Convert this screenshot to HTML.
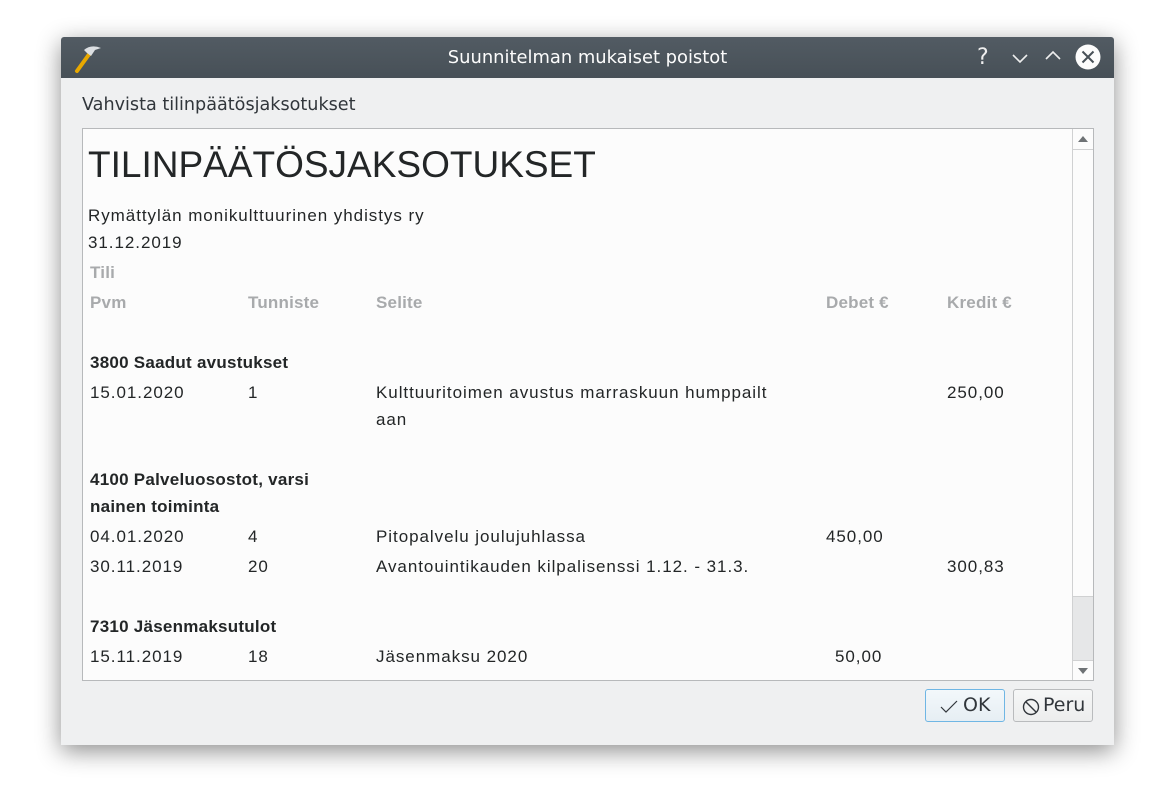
<!DOCTYPE html>
<html><head><meta charset="utf-8"><style>
body{margin:0;width:1175px;height:806px;background:#fff;position:relative;overflow:hidden;font-family:"Liberation Sans",sans-serif}
.win{position:absolute;left:61px;top:37px;width:1053px;height:708px;background:#eff0f1;box-shadow:0 6px 24px rgba(0,0,0,.45);border-radius:3px 3px 0 0}
.tb{position:absolute;left:0;top:0;width:1053px;height:41px;background:linear-gradient(#525b63,#475057);border-radius:3px 3px 0 0;color:#fff}
.tb .t{position:absolute;left:0;right:0;top:10px;text-align:center;font-family:"DejaVu Sans",sans-serif;font-size:17.9px;color:#fcfcfc}
.lbl{position:absolute;left:21px;top:58px;font-family:"DejaVu Sans",sans-serif;font-size:17.6px;color:#31363b}
.panel{position:absolute;left:21px;top:91px;width:1010px;height:551px;background:#fcfcfc;border:1px solid #b7b9bb}
.sb{position:absolute;right:0;top:0;width:20px;height:551px;border-left:1px solid #d0d1d2;background:#fcfcfc}
.tx{position:absolute;font-size:17px;letter-spacing:0.95px;color:#232627;white-space:nowrap}
.h{color:#a8aaac;font-weight:bold;letter-spacing:0.2px}
.b{font-weight:bold;letter-spacing:0.25px}
.btn{position:absolute;top:652px;height:33px;border:1px solid #b9bbbd;border-radius:3px;background:linear-gradient(#f6f7f7,#eceded);font-family:"DejaVu Sans",sans-serif;font-size:19px;color:#31363b;box-sizing:border-box}
</style></head><body>
<div class="win">
<div class="tb">
<svg style="position:absolute;left:12px;top:5px" width="30" height="32" viewBox="0 0 30 32"><path d="M4 29 L17 11" stroke="#e8a800" stroke-width="4" stroke-linecap="round"/><path d="M11 8 Q18 2 28 6 L22 8 L18 14 L14 11 Z" fill="#dcdfe2"/></svg>
<div class="t">Suunnitelman mukaiset poistot</div>
<div style="position:absolute;left:916px;top:8px;font-family:'DejaVu Sans';font-size:22px;color:#eee">?</div>
<svg style="position:absolute;left:950px;top:14px" width="18" height="14"><path d="M2 4 L9 11 L16 4" stroke="#eee" stroke-width="1.6" fill="none"/></svg>
<svg style="position:absolute;left:983px;top:12px" width="18" height="14"><path d="M2 10 L9 3 L16 10" stroke="#eee" stroke-width="1.6" fill="none"/></svg>
<svg style="position:absolute;left:1014px;top:7px" width="26" height="26"><circle cx="13" cy="13" r="12.5" fill="#fcfcfc"/><path d="M7.5 7.5 L18.5 18.5 M18.5 7.5 L7.5 18.5" stroke="#475057" stroke-width="2"/></svg>
</div>
<div class="lbl">Vahvista tilinpäätösjaksotukset</div>
<div class="panel">
<div class="tx" style="left:5px;top:15px;font-size:37px;letter-spacing:0">TILINPÄÄTÖSJAKSOTUKSET</div>
<div class="tx" style="left:5px;top:77px">Rymättylän monikulttuurinen yhdistys ry</div>
<div class="tx" style="left:5px;top:104px">31.12.2019</div>
<div class="tx h" style="left:7px;top:134px">Tili</div>
<div class="tx h" style="left:7px;top:164px">Pvm</div>
<div class="tx h" style="left:165px;top:164px">Tunniste</div>
<div class="tx h" style="left:293px;top:164px">Selite</div>
<div class="tx h" style="left:743px;top:164px">Debet €</div>
<div class="tx h" style="left:864px;top:164px">Kredit €</div>
<div class="tx b" style="left:7px;top:224px">3800 Saadut avustukset</div>
<div class="tx" style="left:7px;top:254px">15.01.2020</div>
<div class="tx" style="left:165px;top:254px">1</div>
<div class="tx" style="left:293px;top:254px">Kulttuuritoimen avustus marraskuun humppailt</div>
<div class="tx" style="left:293px;top:281px">aan</div>
<div class="tx" style="left:864px;top:254px">250,00</div>
<div class="tx b" style="left:7px;top:341px">4100 Palveluosostot, varsi</div>
<div class="tx b" style="left:7px;top:368px">nainen toiminta</div>
<div class="tx" style="left:7px;top:398px">04.01.2020</div>
<div class="tx" style="left:165px;top:398px">4</div>
<div class="tx" style="left:293px;top:398px">Pitopalvelu joulujuhlassa</div>
<div class="tx" style="left:743px;top:398px">450,00</div>
<div class="tx" style="left:7px;top:428px">30.11.2019</div>
<div class="tx" style="left:165px;top:428px">20</div>
<div class="tx" style="left:293px;top:428px">Avantouintikauden kilpalisenssi 1.12. - 31.3.</div>
<div class="tx" style="left:864px;top:428px">300,83</div>
<div class="tx b" style="left:7px;top:488px">7310 Jäsenmaksutulot</div>
<div class="tx" style="left:7px;top:518px">15.11.2019</div>
<div class="tx" style="left:165px;top:518px">18</div>
<div class="tx" style="left:293px;top:518px">Jäsenmaksu 2020</div>
<div class="tx" style="left:752px;top:518px">50,00</div>
<div class="sb">
<div style="position:absolute;left:0;top:0;width:20px;height:20px;border-bottom:1px solid #d0d1d2"></div>
<svg style="position:absolute;left:4px;top:6px" width="12" height="8"><path d="M1 7 L6 1 L11 7Z" fill="#6e7275"/></svg>
<div style="position:absolute;left:0;top:467px;width:20px;height:64px;background:#e6e7e8;border-top:1px solid #d0d1d2"></div>
<div style="position:absolute;left:0;top:531px;width:20px;height:20px;border-top:1px solid #d0d1d2"></div>
<svg style="position:absolute;left:4px;top:538px" width="12" height="8"><path d="M1 1 L6 7 L11 1Z" fill="#6e7275"/></svg>
</div>
</div>
<div class="btn" style="left:864px;width:80px;border-color:#6fb6e4;background:linear-gradient(#f3f8fb,#e6eef3)">
<svg style="position:absolute;left:14px;top:10px" width="18" height="14"><path d="M1 7 L6 12 L17 1" stroke="#31363b" stroke-width="1.2" fill="none"/></svg>
<span style="position:absolute;left:37px;top:4px">OK</span></div>
<div class="btn" style="left:952px;width:80px">
<svg style="position:absolute;left:8px;top:8px" width="18" height="18"><circle cx="9" cy="9" r="7.5" stroke="#31363b" stroke-width="1.4" fill="none"/><path d="M4 4 L14 14" stroke="#31363b" stroke-width="1.4"/></svg>
<span style="position:absolute;left:29px;top:4px">Peru</span></div>
</div>
</body></html>
